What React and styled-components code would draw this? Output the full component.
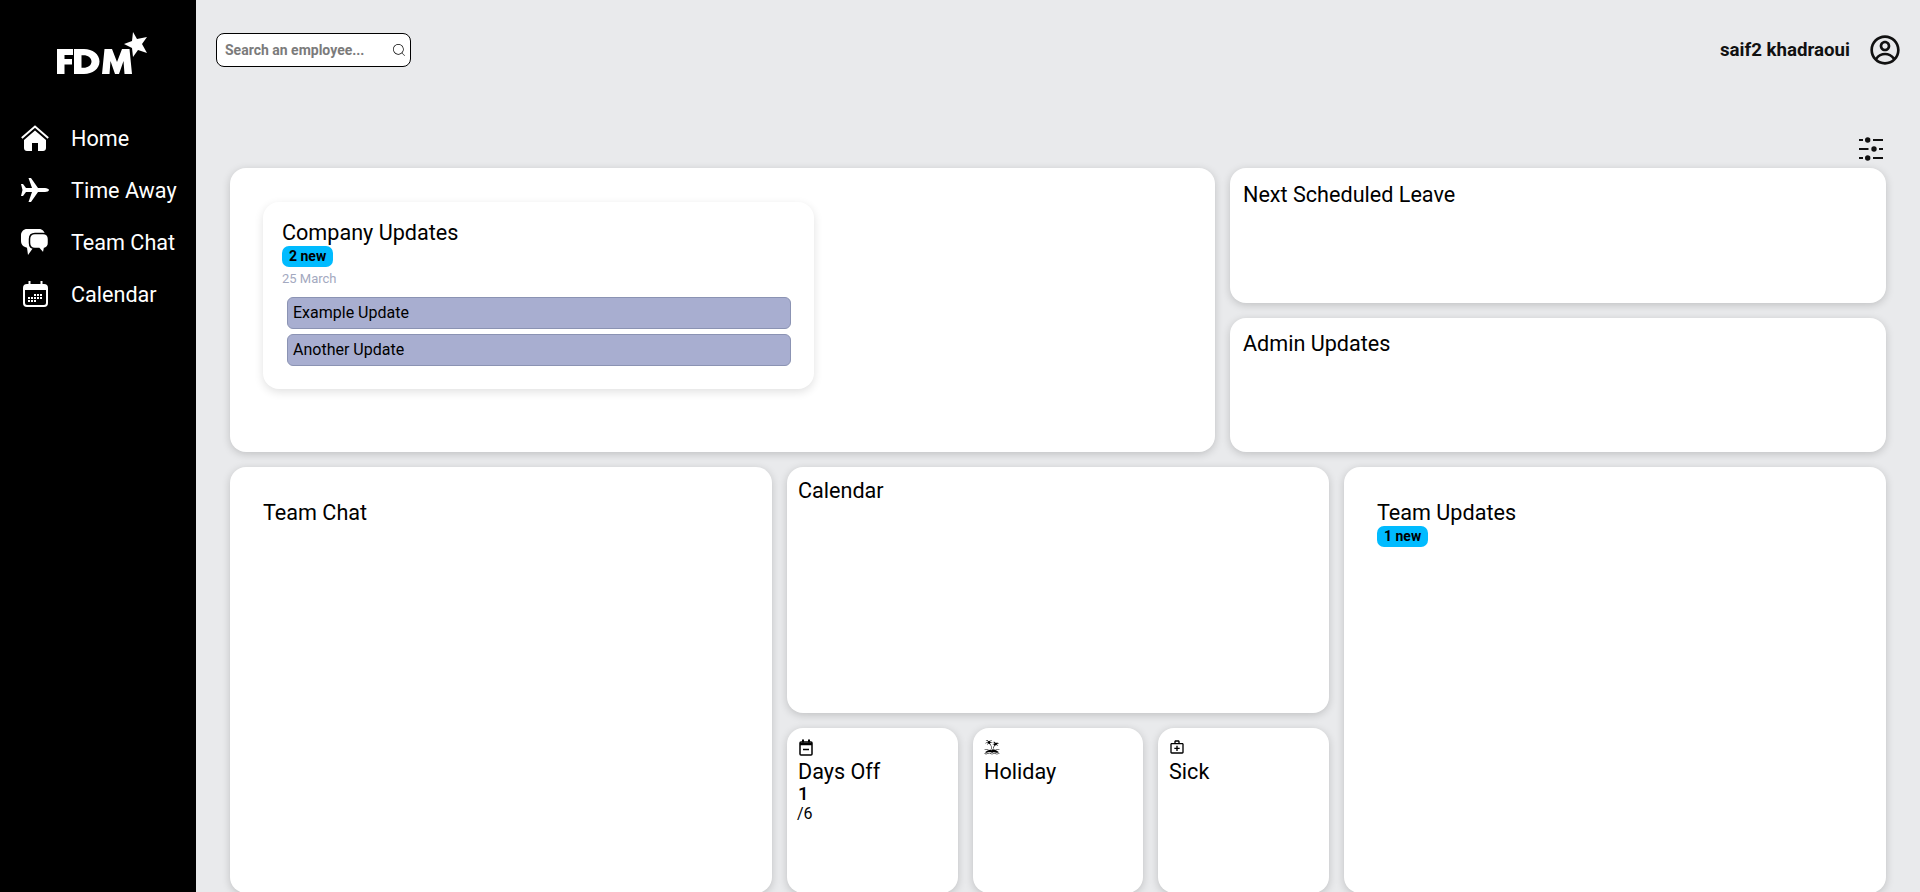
import styled, { createGlobalStyle } from "styled-components";
import { CgProfile } from "react-icons/cg";
import { CiSearch } from "react-icons/ci";
import { MdOutlineMedicalServices } from "react-icons/md";
import { GiIsland } from "react-icons/gi";

const GlobalStyle = createGlobalStyle`
html, body {
    margin: 0;
    height: 892px;
    overflow: hidden;
    background: #e9eaec;
    font-family: Roboto, "Liberation Sans", sans-serif;
}
* { box-sizing: border-box; }
`;

const Page = styled.div`
display: flex;
height: 892px;
overflow: hidden;
`;

const Sidebar = styled.aside`
width: 196px;
flex-shrink: 0;
background: #000;
color: #fff;
padding: 32px 0 0 21px;
`;

const LogoWrap = styled.div`
height: 44px;
margin: 0 0 45px 36px;
svg { display: block; }
`;

const NavList = styled.nav`
display: flex;
flex-direction: column;
gap: 18px;
`;

const NavRow = styled.div`
display: flex;
align-items: center;
height: 34px;
font-size: 21.6px;
color: #fff;
`;

const NavIcon = styled.span`
width: 50px;
display: flex;
align-items: center;
svg { display: block; }
`;

const Main = styled.main`
flex: 1;
min-width: 0;
padding: 33px 19px 0 20px;
`;

const TopBar = styled.header`
display: flex;
align-items: center;
justify-content: space-between;
height: 34px;
`;

const SearchBox = styled.div`
width: 195px;
height: 34px;
display: flex;
align-items: center;
justify-content: space-between;
padding: 0 3px 0 8px;
background: #fff;
border: 1px solid #000;
border-radius: 8px;
font-size: 14px;
font-weight: 700;
color: #7b7b7b;
`;

const UserArea = styled.div`
display: flex;
align-items: center;
gap: 19px;
font-size: 18.7px;
font-weight: 700;
color: #111;
svg { display: block; }
`;

const FilterRow = styled.div`
display: flex;
justify-content: flex-end;
height: 101px;
padding: 70px 18px 0 0;
svg { display: block; }
`;

const Board = styled.div`
margin: 0 15px 0 14px;
display: grid;
grid-template-columns: 985px 656px;
gap: 15px;
`;

const Card = styled.section`
background: #fff;
border-radius: 16px;
box-shadow: 0 2px 8px rgba(0, 0, 0, 0.18);
padding: ${(p) => p.$pad || "12px 13px"};
height: ${(p) => (p.$h ? p.$h + "px" : "auto")};
`;

const SideStack = styled.div`
display: grid;
grid-template-rows: 135px 134px;
gap: 15px;
`;

const LowerRow = styled.div`
grid-column: 1 / 3;
display: grid;
grid-template-columns: 542px 542px 542px;
gap: 15px;
`;

const MiddleStack = styled.div`
display: flex;
flex-direction: column;
gap: 15px;
`;

const SmallRow = styled.div`
display: grid;
grid-template-columns: 171px 170px 171px;
gap: 15px;
`;

const Title = styled.h2`
margin: 0;
font-size: 21.6px;
font-weight: 400;
line-height: 26px;
color: #000;
`;

const InnerCard = styled.div`
width: 551px;
height: 187px;
background: #fff;
border-radius: 16px;
box-shadow: 0 3px 10px rgba(0, 0, 0, 0.12);
padding: 18px 23px 0 19px;
`;

const Badge = styled.span`
display: block;
width: fit-content;
height: 21px;
padding: 0 7px;
background: #00bbff;
border-radius: 7px;
font-size: 14px;
font-weight: 700;
line-height: 21px;
color: #000;
`;

const DateLabel = styled.div`
margin-top: 4px;
font-size: 13px;
line-height: 16px;
color: #a3a9c0;
`;

const UpdateList = styled.div`
margin: 10px 0 0 5px;
display: flex;
flex-direction: column;
gap: 5px;
`;

const UpdateRow = styled.div`
height: 32px;
padding: 0 5px;
background: #a8aed0;
border: 1px solid #8b93b3;
border-radius: 6px;
font-size: 16px;
line-height: 30px;
color: #000;
`;

const SmallIcon = styled.div`
height: 20px;
svg { display: block; }
`;

const Count = styled.div`
font-size: 18.7px;
font-weight: 500;
line-height: 18px;
`;

const Total = styled.div`
margin: 2px 0 0 -1px;
font-size: 16px;
line-height: 18px;
`;

function Logo() {
    return (
        <svg width="92" height="44" viewBox="0 0 92 44" fill="#fff">
            <path d="M0 17h16v6H7.500v4H15v5.500H7.500V42H0z" />
            <path d="M17 17h10c8.500 0 15.500 5 15.500 12.500S35.500 42 27 42H17zm7.500 6.200v12.600h2c4.500 0 8-2.500 8-6.300s-3.500-6.300-8-6.300z" />
            <path d="M45 42l2.500-25H55l5 13 5-13h7.500L75 42h-7.500l-1-13L62 42h-4l-4.500-13-1 13z" />
            <path d="M76 0l4 7 10-2-5 7 5 9-9-3-5 7-1-9-8-4 8-3z" />
        </svg>
    );
}

function HomeIcon() {
    return (
        <svg width="28" height="26" viewBox="0 0 28 26" fill="#fff">
            <path d="M0.800 13L14 1.500 27.200 13" fill="none" stroke="#fff" strokeWidth="2" />
            <path d="M14 5.500l11 9.500v8c0 1.700-1.300 3-3 3h-5v-8h-6v8H6c-1.700 0-3-1.300-3-3v-8z" />
        </svg>
    );
}

function PlaneIcon() {
    return (
        <svg width="28" height="24" viewBox="0 0 28 24" fill="#fff">
            <path d="M28 12c0-1-2-2-4-2h-7L10 0H7.500L11 10H5L2 6H0l1.500 6L0 18h2l3-4h6L7.500 24H10l7-10h7c2 0 4-1 4-2z" />
        </svg>
    );
}

function ChatIcon() {
    return (
        <svg width="28" height="26" viewBox="0 0 28 26" fill="#fff">
            <path d="M6 0h12c3.300 0 6 2.700 6 6v7c0 3.300-2.700 6-6 6h-6l-5 7-1-7.300C2.500 18 0 15.500 0 12V6c0-3.300 2.700-6 6-6z" />
            <path d="M14 4.500h8c3.300 0 5.500 2.200 5.500 5.500v4c0 2.800-1.600 4.800-4 5.400l-1 5.100-4.500-5H14c-3.300 0-5.500-2.200-5.500-5.500v-4c0-3.300 2.200-5.500 5.500-5.500z" stroke="#000" strokeWidth="1.500" />
        </svg>
    );
}

function CalendarIcon() {
    const dots = [];
    for (let r = 0; r < 3; r++) {
        for (let c = 0; c < 5; c++) {
            if (r === 0 && c < 2) continue;
            if (r === 2 && c > 2) continue;
            dots.push(<rect key={r + "-" + c} x={5 + c * 3} y={13 + r * 3} width="2" height="2" fill="#fff" />);
        }
    }
    return (
        <svg width="27" height="26" viewBox="-2 0 27 26" fill="none">
            <rect x="1" y="4" width="23" height="21" rx="3" stroke="#fff" strokeWidth="2" />
            <path d="M1 5h23v4H1z" fill="#fff" />
            <path d="M6.500 0v5M18.500 0v5" stroke="#fff" strokeWidth="2" />
            {dots}
        </svg>
    );
}

function FilterIcon() {
    return (
        <svg width="24" height="25" viewBox="0 0 24 25" stroke="#111" strokeWidth="2" fill="#111">
            <path d="M0 3h4M14 3h10M0 12h9.500M20 12h4M0 21h4M14 21h10" />
            <circle cx="8.700" cy="3" r="2.700" stroke="none" />
            <circle cx="15" cy="12" r="2.700" stroke="none" />
            <circle cx="8.700" cy="21" r="2.700" stroke="none" />
        </svg>
    );
}

function DaysOffIcon() {
    return (
        <svg width="16" height="17" viewBox="0 0 16 17" fill="none" stroke="#000" strokeWidth="1.500">
            <rect x="2" y="3" width="12" height="13" rx="1" />
            <path d="M2 5h12" strokeWidth="2.500" />
            <path d="M5 0.500v3M11 0.500v3" strokeWidth="2" />
            <path d="M5 10.500h6" />
        </svg>
    );
}

// 사이드바 메뉴
const navItems = [
    { label: "Home", icon: <HomeIcon /> },
    { label: "Time Away", icon: <PlaneIcon /> },
    { label: "Team Chat", icon: <ChatIcon /> },
    { label: "Calendar", icon: <CalendarIcon /> },
];

const updates = ["Example Update", "Another Update"];

function App() {
    return (
        <Page>
            <GlobalStyle />
            <Sidebar>
                <LogoWrap><Logo /></LogoWrap>
                <NavList>
                    {navItems.map((item) => (
                        <NavRow key={item.label}>
                            <NavIcon>{item.icon}</NavIcon>
                            {item.label}
                        </NavRow>
                    ))}
                </NavList>
            </Sidebar>
            <Main>
                <TopBar>
                    <SearchBox>
                        Search an employee...
                        <CiSearch size={16} color="#000" />
                    </SearchBox>
                    <UserArea>
                        saif2 khadraoui
                        <CgProfile size={32} color="#111" />
                    </UserArea>
                </TopBar>
                <FilterRow><FilterIcon /></FilterRow>
                <Board>
                    <Card $pad="34px 33px" $h={284}>
                        <InnerCard>
                            <Title>Company Updates</Title>
                            <Badge>2 new</Badge>
                            <DateLabel>25 March</DateLabel>
                            <UpdateList>
                                {updates.map((text) => (
                                    <UpdateRow key={text}>{text}</UpdateRow>
                                ))}
                            </UpdateList>
                        </InnerCard>
                    </Card>
                    <SideStack>
                        <Card $pad="14px 13px"><Title>Next Scheduled Leave</Title></Card>
                        <Card $pad="13px 13px"><Title>Admin Updates</Title></Card>
                    </SideStack>
                    <LowerRow>
                        <Card $pad="33px 33px" $h={426}><Title>Team Chat</Title></Card>
                        <MiddleStack>
                            <Card $pad="11px 11px" $h={246}><Title>Calendar</Title></Card>
                            <SmallRow>
                                <Card $pad="11px 11px" $h={165}>
                                    <SmallIcon><DaysOffIcon /></SmallIcon>
                                    <Title>Days Off</Title>
                                    <Count>1</Count>
                                    <Total>/6</Total>
                                </Card>
                                <Card $pad="11px 11px" $h={165}>
                                    <SmallIcon><GiIsland size={16} color="#000" /></SmallIcon>
                                    <Title>Holiday</Title>
                                </Card>
                                <Card $pad="11px 11px" $h={165}>
                                    <SmallIcon><MdOutlineMedicalServices size={16} color="#000" /></SmallIcon>
                                    <Title>Sick</Title>
                                </Card>
                            </SmallRow>
                        </MiddleStack>
                        <Card $pad="33px 33px" $h={426}>
                            <Title>Team Updates</Title>
                            <Badge>1 new</Badge>
                        </Card>
                    </LowerRow>
                </Board>
            </Main>
        </Page>
    );
}

export default App;
